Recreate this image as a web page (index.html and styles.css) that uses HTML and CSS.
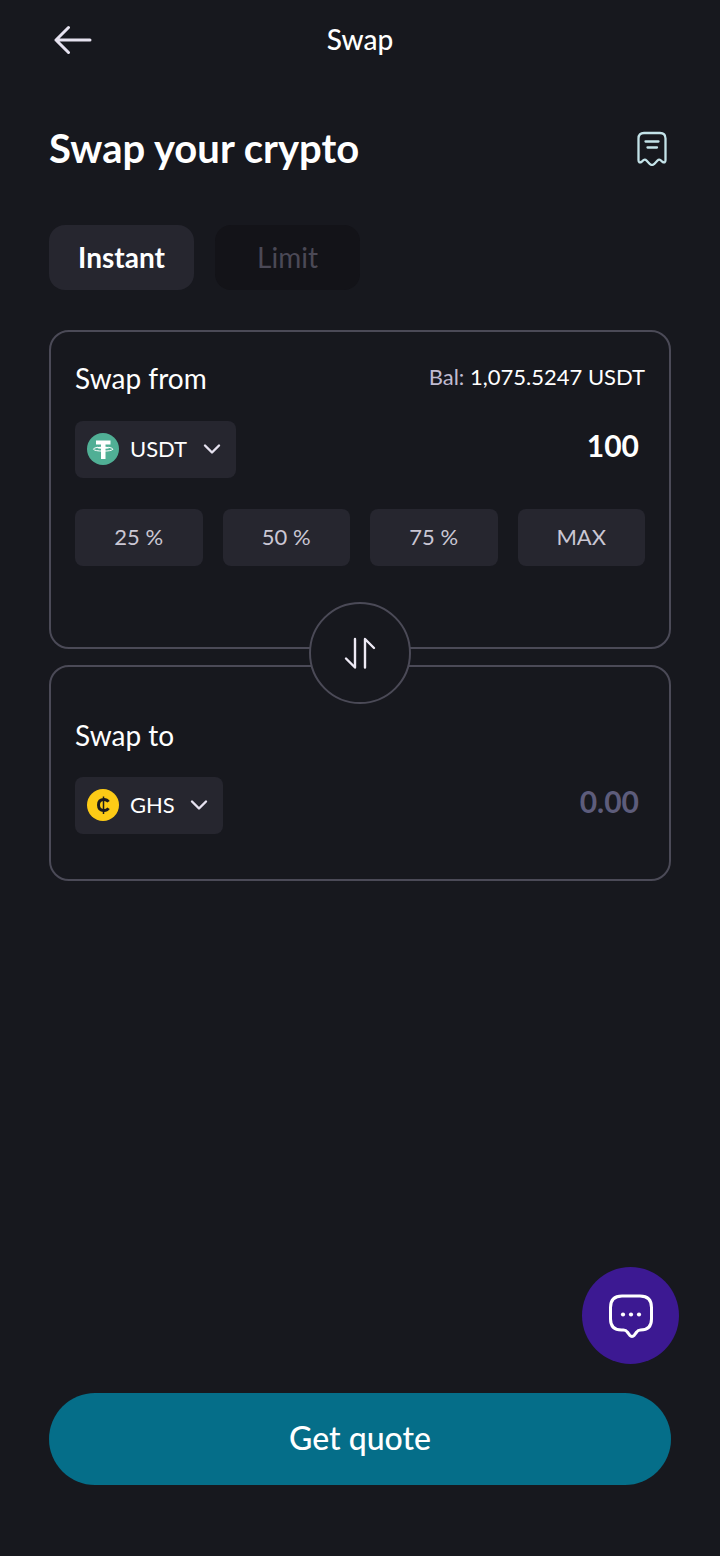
FILE: index.html
```html
<!DOCTYPE html>
<html lang="en">
<head>
<meta charset="utf-8">
<meta name="viewport" content="width=device-width, initial-scale=1">
<title>Swap</title>
<link rel="stylesheet" href="styles.css">
</head>
<body>
<header class="topbar">
  <button class="icon-button back" type="button" aria-label="Back">
    <svg width="38" height="30" viewBox="0 0 38 30" fill="none" stroke="#e6e2f0" stroke-width="3" stroke-linecap="round" stroke-linejoin="round"><path d="M36 15H2M14.500 2.500L2 15l12.500 12.500"/></svg>
  </button>
  <p class="topbar-title">Swap</p>
</header>
<main class="page">
  <div class="heading">
    <h1 class="heading-title">Swap your crypto</h1>
    <button class="icon-button" type="button" aria-label="Swap history">
      <svg width="32" height="36" viewBox="0 0 32 36" fill="none" stroke="#c3e2e8" stroke-width="2.300" stroke-linecap="round" stroke-linejoin="round"><path d="M2.500 30V8.500q0-5.500 5.500-5.500h16q5.500 0 5.500 5.500V30q0 4-3.500 1.500l-1.500-1.300q-1.500-1.200-3 .3l-3.500 3.700q-2 1.600-4 0l-3.500-3.700q-1.500-1.500-3-.3L6 31.500Q2.500 34 2.500 30z"/><path d="M9.500 11.500h13M11.500 17.500h9.500"/></svg>
    </button>
  </div>
  <div class="tabs">
    <button class="tab tab-active" type="button">Instant</button>
    <button class="tab" type="button" disabled>Limit</button>
  </div>
  <section class="card card-from">
    <div class="card-head">
      <h2 class="card-title">Swap from</h2>
      <p class="balance"><span class="balance-label">Bal:</span> 1,075.5247 USDT</p>
    </div>
    <div class="row">
      <label class="coin">
        <svg width="32" height="32" viewBox="0 0 32 32"><circle cx="16" cy="16" r="16" fill="#50af95"/><path d="M9 7.500h14.500v4h-5v2.200q3.500.2 4 1-.5.900-4 1V26h-4.500V15.700q-3.500-.1-4-1 .5-.8 4-1v-2.200H9z" fill="#fff"/><path d="M11 14.200Q6 15 6.500 16.300q1.500 1.800 9.700 1.800t9.700-1.800Q26 15 21.500 14.200" fill="none" stroke="#fff"/></svg>
        <select class="coin-select" aria-label="Swap from currency"><option>USDT</option></select>
        <svg class="chevron" width="18" height="12" viewBox="0 0 18 12" fill="none" stroke="#e6e2f0" stroke-width="2.400" stroke-linecap="round" stroke-linejoin="round"><path d="M2 2.500l7 7 7-7"/></svg>
      </label>
      <input class="amount" type="text" inputmode="decimal" value="100" aria-label="Amount to swap">
    </div>
    <div class="shares">
      <button class="share" type="button">25 %</button>
      <button class="share" type="button">50 %</button>
      <button class="share" type="button">75 %</button>
      <button class="share" type="button">MAX</button>
    </div>
    <button class="flip" type="button" aria-label="Switch currencies">
      <svg width="32" height="32" viewBox="0 0 32 32" fill="none" stroke="#eeeaf5" stroke-width="2.400" stroke-linecap="round" stroke-linejoin="round"><path d="M11 2v28.500L2 21.500M21 30.500V2l9 9"/></svg>
    </button>
  </section>
  <section class="card card-to">
    <div class="card-head">
      <h2 class="card-title">Swap to</h2>
    </div>
    <div class="row">
      <label class="coin">
        <svg width="32" height="32" viewBox="0 0 32 32" fill="none" stroke="#1b1a1e"><circle cx="16" cy="16" r="16" fill="#fdcb16" stroke="none"/><path d="M21.500 12.800Q20 10.500 17 10.500q-5.500 0-5.500 5.500t5.500 5.500q3 0 4.500-2.300" stroke-width="3"/><path d="M16.500 7.500v17.500" stroke-width="1.500"/></svg>
        <select class="coin-select" aria-label="Swap to currency"><option>GHS</option></select>
        <svg class="chevron" width="18" height="12" viewBox="0 0 18 12" fill="none" stroke="#e6e2f0" stroke-width="2.400" stroke-linecap="round" stroke-linejoin="round"><path d="M2 2.500l7 7 7-7"/></svg>
      </label>
      <input class="amount" type="text" inputmode="decimal" placeholder="0.00" aria-label="Amount received">
    </div>
  </section>
  <button class="quote" type="button">Get quote</button>
</main>
<button class="chat" type="button" aria-label="Chat">
  <svg width="46" height="46" viewBox="0 0 46 46" fill="none" stroke="#fff" stroke-width="3" stroke-linecap="round" stroke-linejoin="round"><path d="M14 3h18Q43.500 3 43.500 14.500V26Q43.500 37 32.500 37q-2.500 0-3.800 2l-2.400 3.200q-2.300 2.600-4.600 0L19.300 39q-1.300-2-3.800-2h-2Q2.500 37 2.500 26V14.500Q2.500 3 14 3z"/><g fill="#fff" stroke="none"><circle cx="15" cy="21.500" r="2.100"/><circle cx="23" cy="21.500" r="2.100"/><circle cx="31" cy="21.500" r="2.100"/></g></svg>
</button>
</body>
</html>
```
FILE: styles.css
```css
* { box-sizing: border-box; }
body {
  margin: 0;
  min-height: 100vh;
  display: flex;
  flex-direction: column;
  position: relative;
  background: #17181e;
  color: #fff;
  font-family: Lato, "Open Sans", sans-serif;
  font-size: 24px;
  line-height: 32px;
}
button, input, select { font: inherit; color: inherit; border: 0; margin: 0; padding: 0; background: none; }
button { cursor: pointer; }
h1, h2, p { margin: 0; font-weight: 400; }
svg { display: block; flex: none; }
.topbar { display: grid; grid-template-columns: 1fr auto 1fr; align-items: center; height: 80px; padding: 0 54px; }
.icon-button { display: block; }
.back { justify-self: start; }
.topbar-title { padding-bottom: 2px; font-size: 28px; font-weight: 500; }
.page { flex: 1; display: flex; flex-direction: column; padding: 44px 49px 71px; }
.heading { display: flex; justify-content: space-between; align-items: center; height: 48px; padding-right: 3px; }
.heading-title { font-size: 40px; line-height: 48px; font-weight: 700; }
.tabs { display: flex; gap: 21px; margin: 53px 0 40px; }
.tab { width: 145px; height: 65px; padding-bottom: 2px; border-radius: 16px; background: #131318; color: #4b4956; font-size: 28px; }
.tab-active { background: #26262f; color: #fff; font-weight: 700; }
.card { position: relative; border: 2px solid #4b4a57; border-radius: 20px; }
.card-from { z-index: 1; padding: 30px 24px 81px; }
.card-to { margin-top: 16px; padding: 52px 24px 45px; }
.card-head { display: flex; justify-content: space-between; align-items: center; margin-bottom: 27px; }
.card-title { font-size: 28px; line-height: 32px; }
.card-to .card-head { margin-bottom: 26px; }
.balance { padding-bottom: 2px; font-size: 22px; line-height: 30px; }
.balance-label { color: #c0bbd0; }
.row { display: flex; justify-content: space-between; align-items: center; }
.coin { display: flex; align-items: center; height: 57px; padding: 0 15px 2px 12px; border-radius: 8px; background: #26262f; }
.coin-select { appearance: none; margin: 0 15px 0 11px; font-size: 22px; }
.amount { flex: 1; min-width: 0; padding: 0 6px 10px; text-align: right; font-size: 30px; line-height: 40px; font-weight: 700; }
.amount::placeholder { color: #5d5c7b; opacity: 1; }
.shares { display: grid; grid-template-columns: repeat(4, 1fr); gap: 20px; margin-top: 31px; }
.share { height: 57px; padding-bottom: 2px; border-radius: 8px; background: #26262f; color: #cac7d4; font-size: 22px; }
.flip {
  position: absolute;
  left: 50%;
  bottom: -57px;
  transform: translateX(-50%);
  display: grid;
  place-items: center;
  width: 102px;
  height: 102px;
  border: 2px solid #4b4a57;
  border-radius: 50%;
  background: #17181e;
}
.quote { height: 92px; margin-top: auto; padding-bottom: 2px; border-radius: 46px; background: #056e89; font-size: 32px; font-weight: 500; }
.chat { position: absolute; right: 41px; bottom: 192px; display: grid; place-items: center; width: 97px; height: 97px; border-radius: 50%; background: #3c1992; }
```
